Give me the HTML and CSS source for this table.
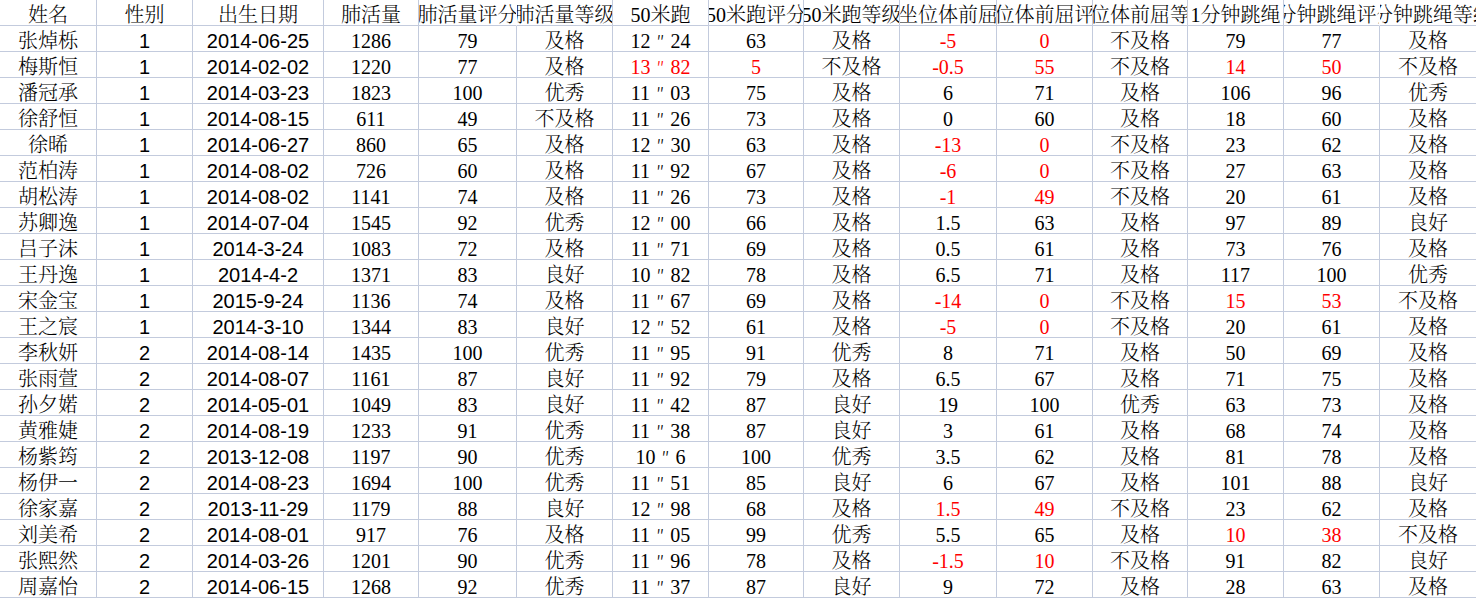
FILE: index.html
```html
<!DOCTYPE html>
<html lang="zh-CN">
<head>
<meta charset="utf-8">
<title>体测成绩</title>
<link rel="stylesheet" href="styles.css">
</head>
<body>
<div class="sheet">
<div class="c h">姓名</div><div class="c h">性别</div><div class="c h">出生日期</div><div class="c h">肺活量</div><div class="c h nb">肺活量评分</div><div class="c h">肺活量等级</div><div class="c h">50米跑</div><div class="c h">50米跑评分</div><div class="c h">50米跑等级</div><div class="c h">坐位体前屈</div><div class="c h">坐位体前屈评分</div><div class="c h">坐位体前屈等级</div><div class="c h">1分钟跳绳</div><div class="c h nb">1分钟跳绳评分</div><div class="c h">1分钟跳绳等级</div>

<div class="c">张焯栎</div><div class="c s">1</div><div class="c s">2014-06-25</div><div class="c">1286</div><div class="c">79</div><div class="c">及格</div><div class="c">12<span class="dp">″</span>24</div><div class="c">63</div><div class="c">及格</div><div class="c r">-5</div><div class="c r">0</div><div class="c">不及格</div><div class="c">79</div><div class="c">77</div><div class="c">及格</div>

<div class="c">梅斯恒</div><div class="c s">1</div><div class="c s">2014-02-02</div><div class="c">1220</div><div class="c">77</div><div class="c">及格</div><div class="c r">13<span class="dp">″</span>82</div><div class="c r">5</div><div class="c">不及格</div><div class="c r">-0.5</div><div class="c r">55</div><div class="c">不及格</div><div class="c r">14</div><div class="c r">50</div><div class="c">不及格</div>

<div class="c">潘冠承</div><div class="c s">1</div><div class="c s">2014-03-23</div><div class="c">1823</div><div class="c">100</div><div class="c">优秀</div><div class="c">11<span class="dp">″</span>03</div><div class="c">75</div><div class="c">及格</div><div class="c">6</div><div class="c">71</div><div class="c">及格</div><div class="c">106</div><div class="c">96</div><div class="c">优秀</div>

<div class="c">徐舒恒</div><div class="c s">1</div><div class="c s">2014-08-15</div><div class="c">611</div><div class="c">49</div><div class="c">不及格</div><div class="c">11<span class="dp">″</span>26</div><div class="c">73</div><div class="c">及格</div><div class="c">0</div><div class="c">60</div><div class="c">及格</div><div class="c">18</div><div class="c">60</div><div class="c">及格</div>

<div class="c">徐晞</div><div class="c s">1</div><div class="c s">2014-06-27</div><div class="c">860</div><div class="c">65</div><div class="c">及格</div><div class="c">12<span class="dp">″</span>30</div><div class="c">63</div><div class="c">及格</div><div class="c r">-13</div><div class="c r">0</div><div class="c">不及格</div><div class="c">23</div><div class="c">62</div><div class="c">及格</div>

<div class="c">范柏涛</div><div class="c s">1</div><div class="c s">2014-08-02</div><div class="c">726</div><div class="c">60</div><div class="c">及格</div><div class="c">11<span class="dp">″</span>92</div><div class="c">67</div><div class="c">及格</div><div class="c r">-6</div><div class="c r">0</div><div class="c">不及格</div><div class="c">27</div><div class="c">63</div><div class="c">及格</div>

<div class="c">胡松涛</div><div class="c s">1</div><div class="c s">2014-08-02</div><div class="c">1141</div><div class="c">74</div><div class="c">及格</div><div class="c">11<span class="dp">″</span>26</div><div class="c">73</div><div class="c">及格</div><div class="c r">-1</div><div class="c r">49</div><div class="c">不及格</div><div class="c">20</div><div class="c">61</div><div class="c">及格</div>

<div class="c">苏卿逸</div><div class="c s">1</div><div class="c s">2014-07-04</div><div class="c">1545</div><div class="c">92</div><div class="c">优秀</div><div class="c">12<span class="dp">″</span>00</div><div class="c">66</div><div class="c">及格</div><div class="c">1.5</div><div class="c">63</div><div class="c">及格</div><div class="c">97</div><div class="c">89</div><div class="c">良好</div>

<div class="c">吕子沫</div><div class="c s">1</div><div class="c s">2014-3-24</div><div class="c">1083</div><div class="c">72</div><div class="c">及格</div><div class="c">11<span class="dp">″</span>71</div><div class="c">69</div><div class="c">及格</div><div class="c">0.5</div><div class="c">61</div><div class="c">及格</div><div class="c">73</div><div class="c">76</div><div class="c">及格</div>

<div class="c">王丹逸</div><div class="c s">1</div><div class="c s">2014-4-2</div><div class="c">1371</div><div class="c">83</div><div class="c">良好</div><div class="c">10<span class="dp">″</span>82</div><div class="c">78</div><div class="c">及格</div><div class="c">6.5</div><div class="c">71</div><div class="c">及格</div><div class="c">117</div><div class="c">100</div><div class="c">优秀</div>

<div class="c">宋金宝</div><div class="c s">1</div><div class="c s">2015-9-24</div><div class="c">1136</div><div class="c">74</div><div class="c">及格</div><div class="c">11<span class="dp">″</span>67</div><div class="c">69</div><div class="c">及格</div><div class="c r">-14</div><div class="c r">0</div><div class="c">不及格</div><div class="c r">15</div><div class="c r">53</div><div class="c">不及格</div>

<div class="c">王之宸</div><div class="c s">1</div><div class="c s">2014-3-10</div><div class="c">1344</div><div class="c">83</div><div class="c">良好</div><div class="c">12<span class="dp">″</span>52</div><div class="c">61</div><div class="c">及格</div><div class="c r">-5</div><div class="c r">0</div><div class="c">不及格</div><div class="c">20</div><div class="c">61</div><div class="c">及格</div>

<div class="c">李秋妍</div><div class="c s">2</div><div class="c s">2014-08-14</div><div class="c">1435</div><div class="c">100</div><div class="c">优秀</div><div class="c">11<span class="dp">″</span>95</div><div class="c">91</div><div class="c">优秀</div><div class="c">8</div><div class="c">71</div><div class="c">及格</div><div class="c">50</div><div class="c">69</div><div class="c">及格</div>

<div class="c">张雨萱</div><div class="c s">2</div><div class="c s">2014-08-07</div><div class="c">1161</div><div class="c">87</div><div class="c">良好</div><div class="c">11<span class="dp">″</span>92</div><div class="c">79</div><div class="c">及格</div><div class="c">6.5</div><div class="c">67</div><div class="c">及格</div><div class="c">71</div><div class="c">75</div><div class="c">及格</div>

<div class="c">孙夕婼</div><div class="c s">2</div><div class="c s">2014-05-01</div><div class="c">1049</div><div class="c">83</div><div class="c">良好</div><div class="c">11<span class="dp">″</span>42</div><div class="c">87</div><div class="c">良好</div><div class="c">19</div><div class="c">100</div><div class="c">优秀</div><div class="c">63</div><div class="c">73</div><div class="c">及格</div>

<div class="c">黄雅婕</div><div class="c s">2</div><div class="c s">2014-08-19</div><div class="c">1233</div><div class="c">91</div><div class="c">优秀</div><div class="c">11<span class="dp">″</span>38</div><div class="c">87</div><div class="c">良好</div><div class="c">3</div><div class="c">61</div><div class="c">及格</div><div class="c">68</div><div class="c">74</div><div class="c">及格</div>

<div class="c">杨紫筠</div><div class="c s">2</div><div class="c s">2013-12-08</div><div class="c">1197</div><div class="c">90</div><div class="c">优秀</div><div class="c">10<span class="dp">″</span>6</div><div class="c">100</div><div class="c">优秀</div><div class="c">3.5</div><div class="c">62</div><div class="c">及格</div><div class="c">81</div><div class="c">78</div><div class="c">及格</div>

<div class="c">杨伊一</div><div class="c s">2</div><div class="c s">2014-08-23</div><div class="c">1694</div><div class="c">100</div><div class="c">优秀</div><div class="c">11<span class="dp">″</span>51</div><div class="c">85</div><div class="c">良好</div><div class="c">6</div><div class="c">67</div><div class="c">及格</div><div class="c">101</div><div class="c">88</div><div class="c">良好</div>

<div class="c">徐家嘉</div><div class="c s">2</div><div class="c s">2013-11-29</div><div class="c">1179</div><div class="c">88</div><div class="c">良好</div><div class="c">12<span class="dp">″</span>98</div><div class="c">68</div><div class="c">及格</div><div class="c r">1.5</div><div class="c r">49</div><div class="c">不及格</div><div class="c">23</div><div class="c">62</div><div class="c">及格</div>

<div class="c">刘美希</div><div class="c s">2</div><div class="c s">2014-08-01</div><div class="c">917</div><div class="c">76</div><div class="c">及格</div><div class="c">11<span class="dp">″</span>05</div><div class="c">99</div><div class="c">优秀</div><div class="c">5.5</div><div class="c">65</div><div class="c">及格</div><div class="c r">10</div><div class="c r">38</div><div class="c">不及格</div>

<div class="c">张熙然</div><div class="c s">2</div><div class="c s">2014-03-26</div><div class="c">1201</div><div class="c">90</div><div class="c">优秀</div><div class="c">11<span class="dp">″</span>96</div><div class="c">78</div><div class="c">及格</div><div class="c r">-1.5</div><div class="c r">10</div><div class="c">不及格</div><div class="c">91</div><div class="c">82</div><div class="c">良好</div>

<div class="c">周嘉怡</div><div class="c s">2</div><div class="c s">2014-06-15</div><div class="c">1268</div><div class="c">92</div><div class="c">优秀</div><div class="c">11<span class="dp">″</span>37</div><div class="c">87</div><div class="c">良好</div><div class="c">9</div><div class="c">72</div><div class="c">及格</div><div class="c">28</div><div class="c">63</div><div class="c">及格</div>
</div>
</body>
</html>
```
FILE: styles.css
```css
html, body {
  margin: 0;
  padding: 0;
  background: #ffffff;
}
.sheet {
  display: grid;
  grid-template-columns: 97px 96px 131px 95px 98px 96px 96px 95px 96px 97px 96px 95px 96px 96px 97px;
  grid-auto-rows: 26px;
  width: 1477px;
  overflow: hidden;
  font-family: "Liberation Serif", "Noto Serif CJK SC", "Noto Sans CJK SC", serif;
  font-size: 20px;
  font-weight: 300;
  color: #000;
}
.c {
  box-sizing: border-box;
  border-right: 1px solid #c3cbdd;
  border-bottom: 1px solid #c3cbdd;
  display: flex;
  align-items: flex-start;
  justify-content: center;
  white-space: nowrap;
  overflow: hidden;
  padding-top: 6px;
  line-height: 19px;
}
.nb {
  border-right-color: transparent;
}
.s {
  font-family: "Liberation Sans", Arial, sans-serif;
  font-weight: 400;
}
.r {
  color: #ff0000;
}
.dp {
  display: inline-block;
  width: 20px;
  text-align: center;
  font-family: "Noto Sans CJK SC", sans-serif;
}
```
